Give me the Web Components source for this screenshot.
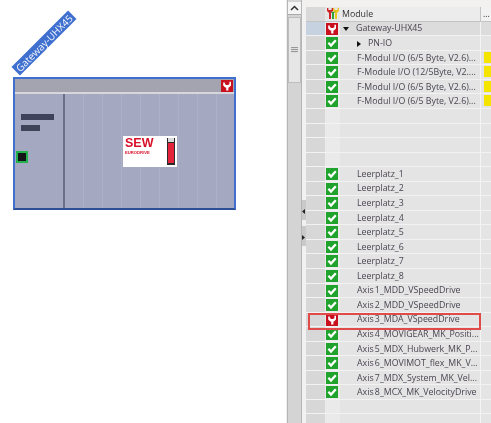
<!DOCTYPE html>
<html>
<head>
<meta charset="utf-8">
<title>Device view</title>
<style>
html, body { margin: 0; height: 100%; background: #fff; overflow: hidden; }
body { display: flex; font-family: "Open Sans", "Liberation Sans", sans-serif; filter: blur(0.35px); }
</style>
</head>
<body>
<device-canvas name="Gateway-UHX45"></device-canvas>
<module-table>
  <module-row kind="fault" col1="#c6d2e0" tree="open" dim>Gateway-UHX45</module-row>
  <module-row kind="ok" tree="closed">PN-IO</module-row>
  <module-row kind="ok" flag>F-Modul I/O (6/5 Byte, V2.6)...</module-row>
  <module-row kind="ok" flag>F-Module I/O (12/5Byte, V2....</module-row>
  <module-row kind="ok" flag>F-Modul I/O (6/5 Byte, V2.6)...</module-row>
  <module-row kind="ok" flag>F-Modul I/O (6/5 Byte, V2.6)...</module-row>
  <module-row></module-row>
  <module-row></module-row>
  <module-row></module-row>
  <module-row></module-row>
  <module-row kind="ok">Leerplatz_1</module-row>
  <module-row kind="ok">Leerplatz_2</module-row>
  <module-row kind="ok">Leerplatz_3</module-row>
  <module-row kind="ok">Leerplatz_4</module-row>
  <module-row kind="ok">Leerplatz_5</module-row>
  <module-row kind="ok">Leerplatz_6</module-row>
  <module-row kind="ok">Leerplatz_7</module-row>
  <module-row kind="ok">Leerplatz_8</module-row>
  <module-row kind="ok" tight>Axis 1_MDD_VSpeedDrive</module-row>
  <module-row kind="ok" tight>Axis 2_MDD_VSpeedDrive</module-row>
  <module-row kind="fault" tight marked>Axis 3_MDA_VSpeedDrive</module-row>
  <module-row kind="ok" tight>Axis 4_MOVIGEAR_MK_Positi...</module-row>
  <module-row kind="ok" tight>Axis 5_MDX_Hubwerk_MK_P...</module-row>
  <module-row kind="ok" tight>Axis 6_MOVIMOT_flex_MK_V...</module-row>
  <module-row kind="ok" tight>Axis 7_MDX_System_MK_Vel...</module-row>
  <module-row kind="ok" tight>Axis 8_MCX_MK_VelocityDrive</module-row>
  <module-row></module-row>
  <module-row></module-row>
</module-table>

<script>
class StatusIcon extends HTMLElement {
    connectedCallback() {
        const kind = this.getAttribute('kind');
        this.attachShadow({ mode: 'open' });
        let art = '';
        if (kind === 'ok') {
            art = `<rect width="12" height="12" fill="#1fa32c"/>
                   <path d="M2.4 5.8 L5 8.6 L9.8 3.2" fill="none" stroke="#fff" stroke-width="2.3"/>`;
        } else if (kind === 'fault') {
            // open-end wrench, lying slightly tilted
            art = `<rect width="12" height="12" fill="#c8101e"/>
                   <path d="M2.2 2.5 L2.2 5.6 L4.2 7.4 L5.2 7.4 L5.2 10.6 L7.4 10.6 L7.4 7.4 L8 7.4 L10 5.4 L10 1.8 L8.4 1.8 L8.4 4.2 L7 5 L5.2 5 L3.9 4 L3.9 2.5 Z" fill="#fff"/>`;
        }
        this.shadowRoot.innerHTML = `
            <style>
                :host { display: block; width: 12px; height: 12px; }
                svg { display: block; }
            </style>
            <svg width="12" height="12" viewBox="0 0 12 12">${art}</svg>
        `;
    }
}
customElements.define('status-icon', StatusIcon);

class DeviceCanvas extends HTMLElement {
    connectedCallback() {
        const name = this.getAttribute('name');
        this.attachShadow({ mode: 'open' });
        this.shadowRoot.innerHTML = `
            <style>
                :host { display: block; position: relative; width: 286px; height: 423px; flex: none; }
                .tag {
                    position: absolute; left: 4px; top: 37px; width: 80px; height: 12px;
                    background: #3f70cf; color: #f6f8fd; font-size: 10px; line-height: 12px;
                    text-align: center; transform: rotate(-45deg); white-space: nowrap;
                }
                .device {
                    position: absolute; left: 13px; top: 77px; width: 219px; height: 129px;
                    border: 2px solid #3f70cf; border-bottom-color: #2c4f96;
                    display: flex; flex-direction: column; background: #a4a9c1;
                }
                .head {
                    height: 13px; flex: none; background: #a4a4b1;
                    border-bottom: 2px solid #d6d6dc;
                    display: flex; justify-content: flex-end; align-items: center; padding-right: 1px;
                }
                .body { flex: 1; display: flex; }
                .side {
                    width: 42px; flex: none; border-right: 2px solid #696f8b;
                    display: flex; flex-direction: column; padding: 20px 0 0 6px;
                }
                .bar { background: #3f4359; height: 6px; margin-bottom: 5px; }
                .bar.a { width: 33px; }
                .bar.b { width: 19px; }
                .port {
                    width: 8px; height: 8px; margin: 15px 0 0 -5px; background: #141418;
                    border: 2px solid #21b04c;
                }
                .slots {
                    flex: 1; display: flex; align-items: flex-start; justify-content: flex-start;
                    background: repeating-linear-gradient(90deg, #a4a9c1 0 18px, #acb1c8 18px 19px);
                    padding: 42px 0 0 58px;
                }
                .logo {
                    width: 54px; height: 31px; background: #fff; display: flex;
                    justify-content: space-between; box-sizing: border-box; padding: 2px;
                }
                .sew { color: #d8112a; font: bold 12.5px/10px "Liberation Sans", sans-serif; }
                .sew small { display: block; font-size: 4.2px; line-height: 5px; margin-top: 2.4px; }
                .bottle { width: 8px; height: 27px; }
            </style>
            <div class="tag">${name}</div>
            <div class="device">
                <div class="head"><status-icon kind="fault"></status-icon></div>
                <div class="body">
                    <div class="side">
                        <div class="bar a"></div>
                        <div class="bar b"></div>
                        <div class="port"></div>
                    </div>
                    <div class="slots">
                        <div class="logo">
                            <div class="sew">SEW<small>EURODRIVE</small></div>
                            <svg class="bottle" viewBox="0 0 8 27">
                                <rect width="8" height="27" fill="#2b2b2b"/>
                                <rect x="1" y="0" width="6" height="4" fill="#d9d9d9"/>
                                <rect x="1" y="5" width="6" height="20" fill="#e3243a"/>
                            </svg>
                        </div>
                    </div>
                </div>
            </div>
        `;
    }
}
customElements.define('device-canvas', DeviceCanvas);

class ModuleTable extends HTMLElement {
    connectedCallback() {
        this.attachShadow({ mode: 'open' });
        this.shadowRoot.innerHTML = `
            <style>
                :host { display: flex; flex: 1; height: 423px; overflow: hidden; background: #f0f0f0; }
                .scroll {
                    width: 15px; flex: none; background: #d4d4d4; margin-left: 1px;
                    border-left: 1px solid #b5b5b5; border-right: 1px solid #b5b5b5; box-sizing: border-box;
                    display: flex; flex-direction: column; padding-top: 2px;
                }
                .up {
                    height: 12px; background: #f4f4f4; color: #333;
                    border-bottom: 1px solid #aaa;
                }
                .up svg { display: block; margin: 3px auto; }
                .thumb {
                    height: 64px; background: #e6e6e6; margin-top: 2px;
                    border: 1px solid #bdbdbd; display: flex; align-items: center; justify-content: center;
                }
                .thumb i { width: 7px; height: 6px; background: repeating-linear-gradient(#999 0 1px, #ddd 1px 2px); }
                .split {
                    width: 4px; flex: none; background: #f1f1f1; display: flex; flex-direction: column;
                    padding-top: 200px;
                }
                .grip { height: 20px; background: #c9c9c9; margin-bottom: 6px; position: relative; }
                .grip svg { position: absolute; left: 0; top: 9px; }
                .table { flex: 1; min-width: 0; }
                .top { height: 7px; background: #f3f1ef; }
                .head {
                    height: 14.7px; display: flex; background: #f2f2f2; color: #333; font-size: 8.8px;
                    border-bottom: 1px solid #c4c4c4; box-sizing: border-box; line-height: 14px;
                }
                .head .c1 { width: 19px; background: #d9d9d9; flex: none; }
                .head .c2 { width: 15px; flex: none; display: flex; align-items: center; justify-content: center; background: #e6e6e6; }
                .head .c3 { width: 141px; flex: none; padding-left: 2px; box-sizing: border-box; border-right: 1px solid #c4c4c4; background: #ececec; }
                .head .c4 { flex: 1; padding-left: 2px; }
            </style>
            <div class="scroll">
                <div class="up"><svg width="9" height="6" viewBox="0 0 9 6"><path d="M1 5 L4.5 1.5 L8 5" fill="none" stroke="#333" stroke-width="1.5"/></svg></div>
                <div class="thumb"><i></i></div>
            </div>
            <div class="split">
                <div class="grip"><svg width="3" height="5" viewBox="0 0 3 5"><path d="M3 0 L0 2.5 L3 5 Z" fill="#222"/></svg></div>
                <div class="grip"><svg width="3" height="5" viewBox="0 0 3 5"><path d="M0 0 L3 2.5 L0 5 Z" fill="#222"/></svg></div>
            </div>
            <div class="table">
                <div class="top"></div>
                <div class="head">
                    <div class="c1"></div>
                    <div class="c2">
                        <svg width="14" height="13" viewBox="0 0 14 13">
                            <path d="M1 1 L1 4 L3 6 L3 12 L5 12 L5 6 L7 4 L7 1 L5.6 1 L5.6 3 L2.4 3 L2.4 1 Z" fill="#d0202a"/>
                            <path d="M7 1 L7 4 L9 6 L9 12 L11 12 L11 6 L13 4 L13 1 L11.6 1 L11.6 3 L8.4 3 L8.4 1 Z" fill="#e8c81e"/>
                            <path d="M4 4 L6 6 L6 12 L8 12 L8 6 L10 4 L8 5 L6 5 Z" fill="#2fa03a"/>
                        </svg>
                    </div>
                    <div class="c3">Module</div>
                    <div class="c4">...</div>
                </div>
                <slot></slot>
            </div>
        `;
    }
}
customElements.define('module-table', ModuleTable);

class ModuleRow extends HTMLElement {
    connectedCallback() {
        const kind = this.getAttribute('kind');
        const tree = this.getAttribute('tree');
        const col1 = this.getAttribute('col1');
        const bg = this.hasAttribute('dim') ? '#dcdcdc' : '#e4e4e4';
        this.attachShadow({ mode: 'open' });
        this.shadowRoot.innerHTML = `
            <style>
                :host {
                    display: flex; height: 14.55px; position: relative; color: #4a4450; font-size: 8.8px;
                    word-spacing: ${this.hasAttribute('tight') ? '-1px' : '0'};
                }
                .c1, .c2, .c3, .c4 { box-sizing: border-box; border-bottom: 1px solid #f2f2f2; }
                .c1 { width: 19px; flex: none; background: ${col1 || '#d7d7d7'}; }
                .c2 { width: 15px; flex: none; background: #eaeaea; padding: 1px 0 0 1px; }
                .c3 {
                    width: 141px; flex: none; background: ${bg}; border-right: 1px solid #f4f4f4;
                    display: flex; align-items: center; white-space: nowrap; overflow: hidden;
                    padding: 1px 0 0 17px; line-height: 13px;
                }
                .c4 { flex: 1; background: ${bg}; }
                .flag { display: block; width: 7px; height: 11px; background: #f5e400; margin: 1px 0 0 3px; }
                .tw { width: 0; height: 0; flex: none; }
                .tw.open { margin: 0 7px 0 -14px; border-left: 3px solid transparent; border-right: 3px solid transparent; border-top: 4px solid #111; }
                .tw.closed { margin: 0 7px 0 0; border-top: 3px solid transparent; border-bottom: 3px solid transparent; border-left: 4px solid #111; }
                .mark { position: absolute; left: 2px; right: 10px; top: 0; bottom: -2.5px; border: 2px solid #e04a48; z-index: 2; }
            </style>
            <div class="c1"></div>
            <div class="c2">${kind ? `<status-icon kind="${kind}"></status-icon>` : ''}</div>
            <div class="c3">${tree ? `<span class="tw ${tree}"></span>` : ''}<slot></slot></div>
            <div class="c4">${this.hasAttribute('flag') ? '<span class="flag"></span>' : ''}</div>
            ${this.hasAttribute('marked') ? '<div class="mark"></div>' : ''}
        `;
    }
}
customElements.define('module-row', ModuleRow);
</script>
</body>
</html>
